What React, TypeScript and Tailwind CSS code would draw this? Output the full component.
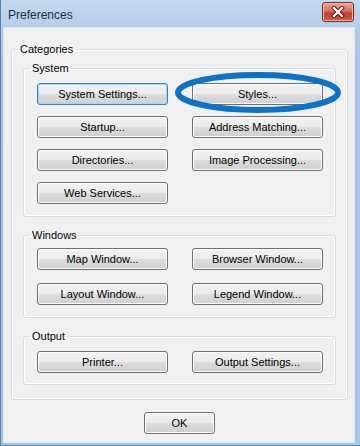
import React from "react";

const btn =
  "h-[22px] rounded-[3px] border border-[#707070] bg-[linear-gradient(180deg,#f2f2f2_0%,#ebebeb_48%,#dddddd_52%,#cfcfcf_100%)] shadow-[inset_0_0_0_1px_#fbfbfb] text-[11px] text-black leading-none flex items-center justify-center";
const btnFocus =
  "h-[22px] rounded-[3px] border border-[#3c7fb1] bg-[linear-gradient(180deg,#f2f2f2_0%,#ebebeb_48%,#dddddd_52%,#cfcfcf_100%)] shadow-[inset_0_0_0_1px_#9edaf8] text-[11px] text-black leading-none flex items-center justify-center";

const legendCls = "ml-[6px] px-[2px] text-[11px] leading-[14px] text-black";
const groupCls = "rounded-[3px] border border-[#d5dfe5] shadow-[inset_0_0_0_1px_#ffffff,0_0_0_0_transparent] m-0 p-0 min-w-0";

function Btn({ label, focus }: { label: string; focus?: boolean }) {
  return <div className={focus ? btnFocus : btn}>{label}</div>;
}

export default function App() {
  return (
    <div
      className="relative w-[360px] h-[446px] flex flex-col bg-[linear-gradient(180deg,#c4d9ef_0px,#b3cdea_28px,#a9c5e6_60px,#a6c4e5_100%)] shadow-[inset_1px_0_0_#5b7fa6,inset_0_-1px_0_#3d90c0]"
      style={{ fontFamily: '"Liberation Sans", Arial, sans-serif' }}
    >
      {/* Title bar */}
      <div className="h-[28px] flex items-center justify-between pl-[8px] pr-[6px]">
        <span className="text-[12px] text-[#1b2c42] leading-none mt-[1px]">Preferences</span>
        <div className="w-[32px] h-[20px] -mt-[4px] rounded-[3px] border border-[#6b2a22] bg-[linear-gradient(180deg,#e8a595_0%,#d4705f_45%,#c2402f_55%,#cf5a44_100%)] shadow-[inset_0_0_0_1px_#f0b8a8] flex items-center justify-center">
          <svg width="14" height="12" viewBox="0 0 14 12">
            <path d="M3 2 L11 10 M11 2 L3 10" stroke="#5a1a12" strokeWidth="4" strokeLinecap="square" />
            <path d="M3 2 L11 10 M11 2 L3 10" stroke="#ffffff" strokeWidth="2.2" strokeLinecap="square" />
          </svg>
        </div>
      </div>

      {/* Client area */}
      <div className="flex-1 ml-[4px] mr-[6px] mb-[4px] bg-[#f0f0f0] shadow-[0_0_0_1px_#dfe9f5] flex flex-col pl-[7px] pr-[6px] pt-[14px]">
        <fieldset className={groupCls}>
          <legend className={legendCls}>Categories</legend>
          <div className="px-[11px] pt-[5px] pb-[14px] flex flex-col gap-[11px]">
            <fieldset className={groupCls}>
              <legend className={legendCls}>System</legend>
              <div className="grid grid-cols-2 gap-x-[24px] gap-y-[11px] pl-[13px] pr-[12px] pt-[8px] pb-[12px]">
                <Btn label="System Settings..." focus />
                <Btn label="Styles..." />
                <Btn label="Startup..." />
                <Btn label="Address Matching..." />
                <Btn label="Directories..." />
                <Btn label="Image Processing..." />
                <Btn label="Web Services..." />
              </div>
            </fieldset>
            <fieldset className={groupCls}>
              <legend className={legendCls}>Windows</legend>
              <div className="grid grid-cols-2 gap-x-[24px] gap-y-[13px] pl-[13px] pr-[12px] pt-[6px] pb-[12px]">
                <Btn label="Map Window..." />
                <Btn label="Browser Window..." />
                <Btn label="Layout Window..." />
                <Btn label="Legend Window..." />
              </div>
            </fieldset>
            <fieldset className={groupCls}>
              <legend className={legendCls}>Output</legend>
              <div className="grid grid-cols-2 gap-x-[24px] pl-[13px] pr-[12px] pt-[8px] pb-[11px]">
                <Btn label="Printer..." />
                <Btn label="Output Settings..." />
              </div>
            </fieldset>
          </div>
        </fieldset>
        <div className="flex justify-center mt-[12px]">
          <div className="w-[71px]">
            <Btn label="OK" />
          </div>
        </div>
      </div>

      {/* Highlight ellipse annotation */}
      <svg className="absolute left-[172px] top-[69px] pointer-events-none" width="172" height="47" viewBox="0 0 172 47">
        <ellipse cx="86" cy="23.5" rx="80" ry="17.5" fill="none" stroke="#0d73c7" strokeWidth="6" />
      </svg>
    </div>
  );
}
